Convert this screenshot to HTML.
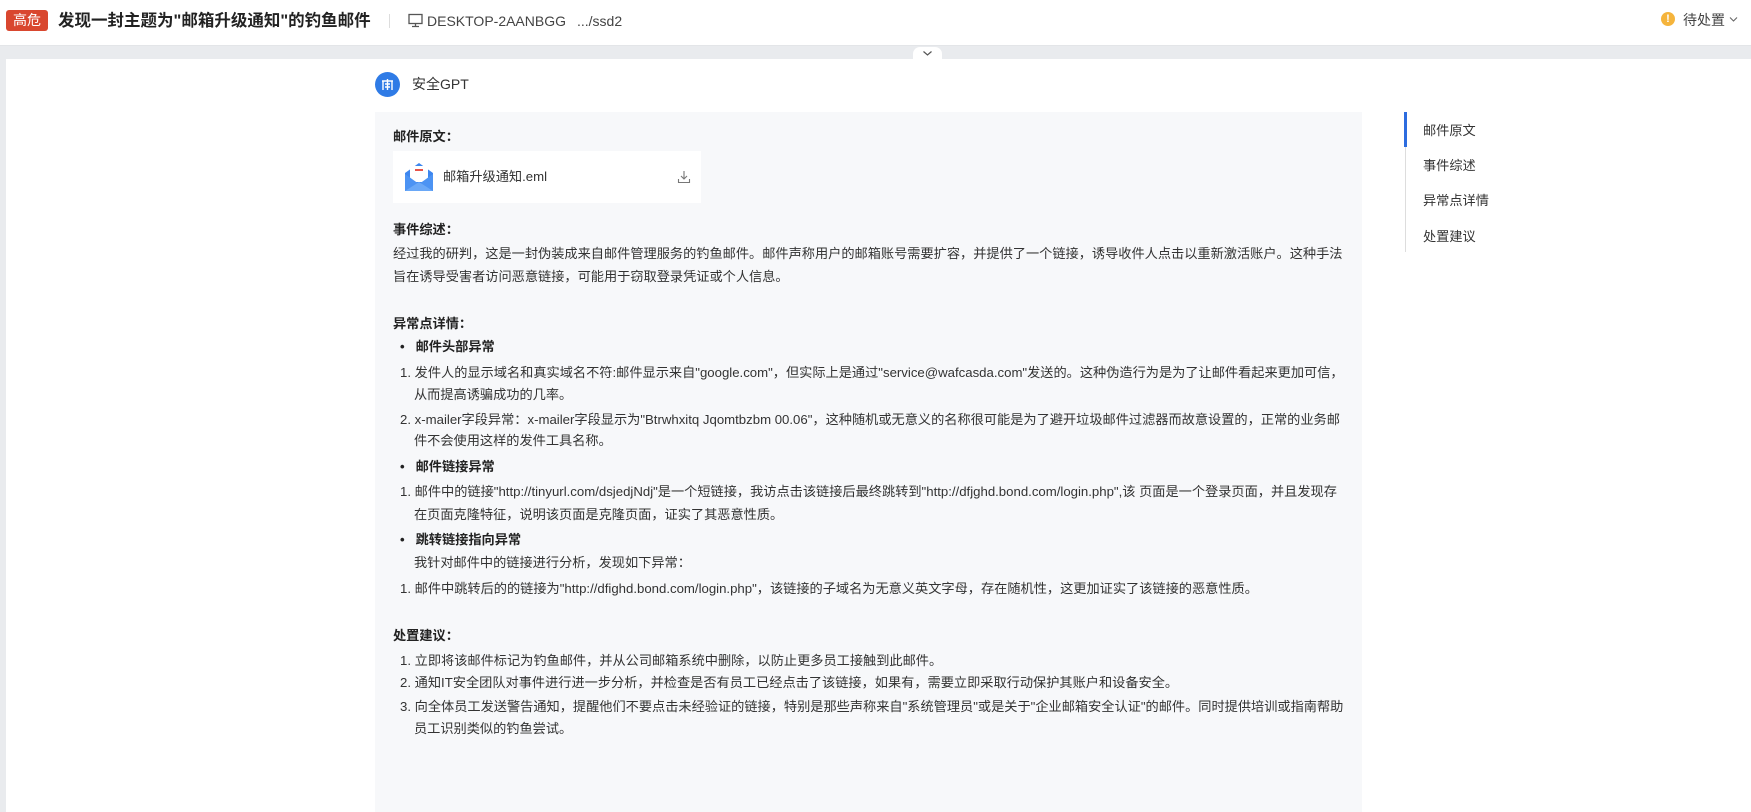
<!DOCTYPE html>
<html><head><meta charset="utf-8"><style>
*{margin:0;padding:0;box-sizing:border-box}
body{width:1751px;height:812px;overflow:hidden;background:#e9ebee;font-family:"Liberation Sans","Noto Sans CJK SC",sans-serif;color:#333;position:relative}
.a{position:absolute;white-space:nowrap}
.t{font-size:13.2px;line-height:18px;color:#333}
.b{font-weight:bold;color:#222}
</style></head><body>
<div class="a" style="left:0;top:0;width:1751px;height:46px;background:#fff;border-bottom:1px solid #e3e5e8"></div>
<div class="a" style="left:6px;top:10px;width:42px;height:21px;background:#d9472f;border-radius:3px;color:#fff;font-size:14px;line-height:21px;text-align:center">高危</div>
<div class="a" style="left:58px;top:10px;font-size:16.5px;line-height:22px;font-weight:bold;color:#222">发现一封主题为"邮箱升级通知"的钓鱼邮件</div>
<div class="a" style="left:389px;top:14px;width:1px;height:14px;background:#ddd"></div>
<svg class="a" style="left:408px;top:13px" width="15" height="15" viewBox="0 0 15 15"><rect x="1" y="1.5" width="13" height="9" fill="none" stroke="#555" stroke-width="1.3"/><path d="M7.5 10.5v2.5M4 13.5h7" stroke="#555" stroke-width="1.3"/></svg>
<div class="a" style="left:427px;top:12px;font-size:14px;line-height:18px;color:#444">DESKTOP-2AANBGG</div>
<div class="a" style="left:577px;top:12px;font-size:14px;line-height:18px;color:#444">.../ssd2</div>
<div class="a" style="left:1661px;top:12px;width:14px;height:14px;border-radius:50%;background:#f5b43c;color:#fff;font-size:11px;line-height:14px;text-align:center;font-weight:bold">!</div>
<div class="a" style="left:1683px;top:11px;font-size:14px;line-height:18px;color:#444">待处置</div>
<svg class="a" style="left:1729px;top:16px" width="9" height="7" viewBox="0 0 9 7"><path d="M1 1.5l3.5 3.5 3.5-3.5" fill="none" stroke="#666" stroke-width="1.1"/></svg>
<div class="a" style="left:6px;top:59px;width:1745px;height:753px;background:#fff"></div>
<div class="a" style="left:913px;top:47px;width:29px;height:14px;background:#fff;border-radius:7px 7px 0 0"></div>
<svg class="a" style="left:922px;top:50px" width="11" height="7" viewBox="0 0 11 7"><path d="M1.5 1.5l4 3.5 4-3.5" fill="none" stroke="#555" stroke-width="1.2"/></svg>
<div class="a" style="left:375px;top:72px;width:25px;height:25px;border-radius:50%;background:#2f7be6"></div>
<svg class="a" style="left:380px;top:77px" width="15" height="15" viewBox="0 0 15 15"><path d="M2 4h11M3 4v9M12 4v9M7.5 2v11M5 7h5M5 10h5" fill="none" stroke="#fff" stroke-width="1.4"/></svg>
<div class="a" style="left:412px;top:75px;font-size:14px;line-height:18px;color:#333">安全GPT</div>
<div class="a" style="left:375px;top:112px;width:987px;height:700px;background:#f7f8fa"></div>
<div class="a t b" style="left:393px;top:128px">邮件原文：</div>
<div class="a" style="left:393px;top:151px;width:308px;height:52px;background:#fff"></div>
<svg class="a" style="left:403px;top:161px" width="32" height="32" viewBox="0 0 32 32"><path d="M2 12l14-10 14 10v18H2z" fill="#3d86ef"/><rect x="7" y="5" width="18" height="16" fill="#fff"/><rect x="12" y="8" width="8" height="2" fill="#e8534a"/><path d="M2 13l14 10 14-10v17H2z" fill="#4c93f3"/><path d="M2 30l14-9 14 9" fill="#6aa8f7"/></svg>
<div class="a t" style="left:443px;top:168px">邮箱升级通知.eml</div>
<svg class="a" style="left:677px;top:170px" width="14" height="14" viewBox="0 0 14 14"><path d="M7 1v8M4 6l3 3 3-3M1.5 9v3.5h11V9" fill="none" stroke="#777" stroke-width="1.1"/></svg>
<div class="a t b" style="left:393px;top:221px">事件综述：</div>
<div class="a t" style="left:393px;top:245px">经过我的研判，这是一封伪装成来自邮件管理服务的钓鱼邮件。邮件声称用户的邮箱账号需要扩容，并提供了一个链接，诱导收件人点击以重新激活账户。这种手法</div>
<div class="a t" style="left:393px;top:268px">旨在诱导受害者访问恶意链接，可能用于窃取登录凭证或个人信息。</div>
<div class="a t b" style="left:393px;top:315px">异常点详情：</div>
<div class="a t b" style="left:400px;top:338px">•&nbsp;&nbsp;&nbsp;邮件头部异常</div>
<div class="a t" style="left:400px;top:364px">1. 发件人的显示域名和真实域名不符:邮件显示来自"google.com"，但实际上是通过"service@wafcasda.com"发送的。这种伪造行为是为了让邮件看起来更加可信，</div>
<div class="a t" style="left:414px;top:386px">从而提高诱骗成功的几率。</div>
<div class="a t" style="left:400px;top:411px">2. x-mailer字段异常：x-mailer字段显示为"Btrwhxitq Jqomtbzbm 00.06"，这种随机或无意义的名称很可能是为了避开垃圾邮件过滤器而故意设置的，正常的业务邮</div>
<div class="a t" style="left:414px;top:432px">件不会使用这样的发件工具名称。</div>
<div class="a t b" style="left:400px;top:458px">•&nbsp;&nbsp;&nbsp;邮件链接异常</div>
<div class="a t" style="left:400px;top:483px">1. 邮件中的链接"http://tinyurl.com/dsjedjNdj"是一个短链接，我访点击该链接后最终跳转到"http://dfjghd.bond.com/login.php",该 页面是一个登录页面，并且发现存</div>
<div class="a t" style="left:414px;top:506px">在页面克隆特征，说明该页面是克隆页面，证实了其恶意性质。</div>
<div class="a t b" style="left:400px;top:531px">•&nbsp;&nbsp;&nbsp;跳转链接指向异常</div>
<div class="a t" style="left:414px;top:554px">我针对邮件中的链接进行分析，发现如下异常：</div>
<div class="a t" style="left:400px;top:580px">1. 邮件中跳转后的的链接为"http://dfighd.bond.com/login.php"，该链接的子域名为无意义英文字母，存在随机性，这更加证实了该链接的恶意性质。</div>
<div class="a t b" style="left:393px;top:627px">处置建议：</div>
<div class="a t" style="left:400px;top:652px">1. 立即将该邮件标记为钓鱼邮件，并从公司邮箱系统中删除，以防止更多员工接触到此邮件。</div>
<div class="a t" style="left:400px;top:674px">2. 通知IT安全团队对事件进行进一步分析，并检查是否有员工已经点击了该链接，如果有，需要立即采取行动保护其账户和设备安全。</div>
<div class="a t" style="left:400px;top:698px">3. 向全体员工发送警告通知，提醒他们不要点击未经验证的链接，特别是那些声称来自"系统管理员"或是关于"企业邮箱安全认证"的邮件。同时提供培训或指南帮助</div>
<div class="a t" style="left:414px;top:720px">员工识别类似的钓鱼尝试。</div>
<div class="a" style="left:1405px;top:112px;width:1px;height:140px;background:#ddd"></div>
<div class="a" style="left:1404px;top:112px;width:3px;height:35px;background:#2d6cdf"></div>
<div class="a t" style="left:1423px;top:122px">邮件原文</div>
<div class="a t" style="left:1423px;top:157px">事件综述</div>
<div class="a t" style="left:1423px;top:192px">异常点详情</div>
<div class="a t" style="left:1423px;top:228px">处置建议</div>
</body></html>
